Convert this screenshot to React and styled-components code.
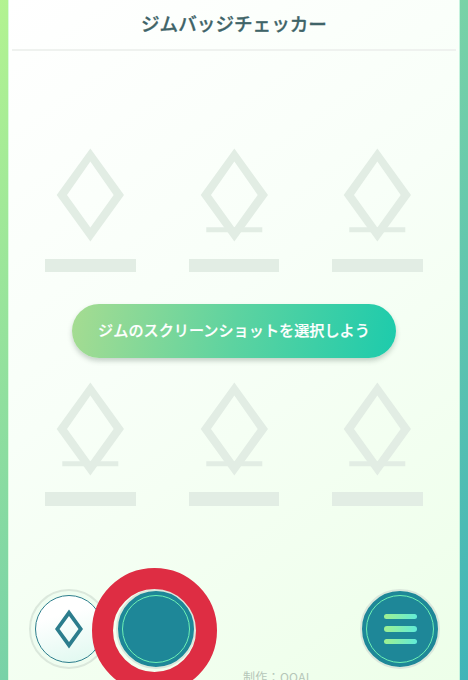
import styled, { createGlobalStyle } from "styled-components";

const GlobalStyle = createGlobalStyle`
  * {
    box-sizing: border-box;
  }

  body {
    margin: 0;
    font-family: "Noto Sans CJK JP", sans-serif;
  }
`;

const Frame = styled.div`
  height: 680px;
  padding: 0 8px;
  overflow: hidden;
  background: linear-gradient(to bottom right, #b3f391, #78d2a7 50%, #3fb4b8);
`;

const Screen = styled.main`
  position: relative;
  display: flex;
  flex-direction: column;
  height: 680px;
  background: linear-gradient(145deg, #ffffff, #f8fff8 45%, #edffe9);
  box-shadow: inset 1px 0 #d9fbdc, inset -1px 0 #c5f2de;
`;

const Header = styled.header`
  height: 51px;
  margin: 0 4px;
  border-bottom: 2px solid #eff2ef;
  text-align: center;

  h1 {
    margin: 0;
    font-size: 18.6px;
    line-height: 46px;
    font-weight: 500;
    color: #3f6468;
    -webkit-text-stroke: 0.3px #3f6468;
  }
`;

const BadgeGrid = styled.section`
  display: grid;
  grid-template-columns: repeat(3, 90.7px);
  column-gap: 53px;
  justify-content: center;
  height: 124px;
  margin-top: ${({ $top }) => $top}px;
`;

const Badge = styled.div`
  display: flex;
  flex-direction: column;
  justify-content: space-between;

  svg {
    display: block;
    width: 90.7px;
    height: 94px;
    fill: #e2ede4;
  }
`;

const NameBar = styled.div`
  height: 13.5px;
  background-color: #e2ede4;
`;

const SelectButton = styled.button`
  flex-shrink: 0;
  align-self: center;
  width: 324px;
  height: 54px;
  margin-top: 31.5px;
  padding: 0 0 3px;
  border: none;
  border-radius: 27px;
  background: linear-gradient(100deg, #a6dc91, #5dd3a0 50%, #1dcbac);
  box-shadow: 0 3px 5px rgba(70, 90, 80, 0.28);
  font-family: inherit;
  font-size: 15.15px;
  font-weight: 500;
  color: #fff;
  -webkit-text-stroke: 0.2px #fff;
  white-space: nowrap;
`;

const Dock = styled.nav`
  display: flex;
  margin: 83px 20px 0 21px;
`;

const RoundButton = styled.button`
  display: grid;
  place-items: center;
  width: 80px;
  height: 80px;
  padding: 0;
  border: 2px solid #dbe8dc;
  border-radius: 50%;
  background-color: ${({ $dark }) => ($dark ? "#1e8798" : "#effdf0")};
  margin-left: ${({ $gap }) => $gap || 0};

  svg {
    display: block;
  }
`;

const InnerRing = styled.span`
  display: grid;
  place-items: center;
  width: 68px;
  height: 68px;
  border: ${({ $dark }) => ($dark ? "1.5px solid #6ef0b4" : "1px solid #2c7d8d")};
  border-radius: 50%;
  background: ${({ $dark }) =>
    $dark ? "none" : "linear-gradient(165deg, #ffffff 30%, #def8ef)"};
`;

const MenuLines = styled.span`
  display: grid;
  gap: 7px;

  i {
    width: 33px;
    height: 5.5px;
    border-radius: 3px;
    background: linear-gradient(100deg, #a0f090, #60ecd8);
  }
`;

const TapMarker = styled.div`
  position: absolute;
  top: 568px;
  left: 84px;
  width: 125px;
  height: 125px;
  border: 21px solid #de2d43;
  border-radius: 50%;
  pointer-events: none;
`;

const Credit = styled.p`
  position: absolute;
  top: 668px;
  left: 235px;
  margin: 0;
  font-size: 12px;
  line-height: 18px;
  letter-spacing: 0.3px;
  color: #b5c6b8;
  white-space: nowrap;
`;

const rows = [
  [false, true, true],
  [true, true, true],
];

function BadgeRow({ badges, top }) {
  return (
    <BadgeGrid $top={top}>
      {badges.map((hasLine, index) => (
        <Badge key={index}>
          <svg viewBox='0 0 90.7 94'>
            <path
              fillRule='evenodd'
              d='M45.35 .5L79 47L45.35 93.5L11.7 47ZM45.35 13.5L22 47L45.35 79.5L68.7 47Z'
            />
            {hasLine && <path d='M17.3 79.3H73.3V84.2H17.3Z' />}
          </svg>
          <NameBar />
        </Badge>
      ))}
    </BadgeGrid>
  );
}

export default function App() {
  return (
    <>
      <GlobalStyle />
      <Frame>
        <Screen>
          <Header>
            <h1>ジムバッジチェッカー</h1>
          </Header>
          <BadgeRow badges={rows[0]} top={97} />
          <SelectButton>ジムのスクリーンショットを選択しよう</SelectButton>
          <BadgeRow badges={rows[1]} top={24.4} />
          <Dock>
            <RoundButton>
              <InnerRing>
                <svg width='28' height='40' viewBox='0 0 28 40'>
                  <path
                    fillRule='evenodd'
                    fill='#2c7d8d'
                    d='M14 .5L28 20L14 39.5L0 20ZM14 7L4.5 20L14 33L23.5 20Z'
                  />
                </svg>
              </InnerRing>
            </RoundButton>
            <RoundButton $dark $gap='7px'>
              <InnerRing $dark />
            </RoundButton>
            <RoundButton $dark $gap='auto'>
              <InnerRing $dark>
                <MenuLines>
                  <i />
                  <i />
                  <i />
                </MenuLines>
              </InnerRing>
            </RoundButton>
          </Dock>
          <TapMarker />
          <Credit>制作：QOAL</Credit>
        </Screen>
      </Frame>
    </>
  );
}
